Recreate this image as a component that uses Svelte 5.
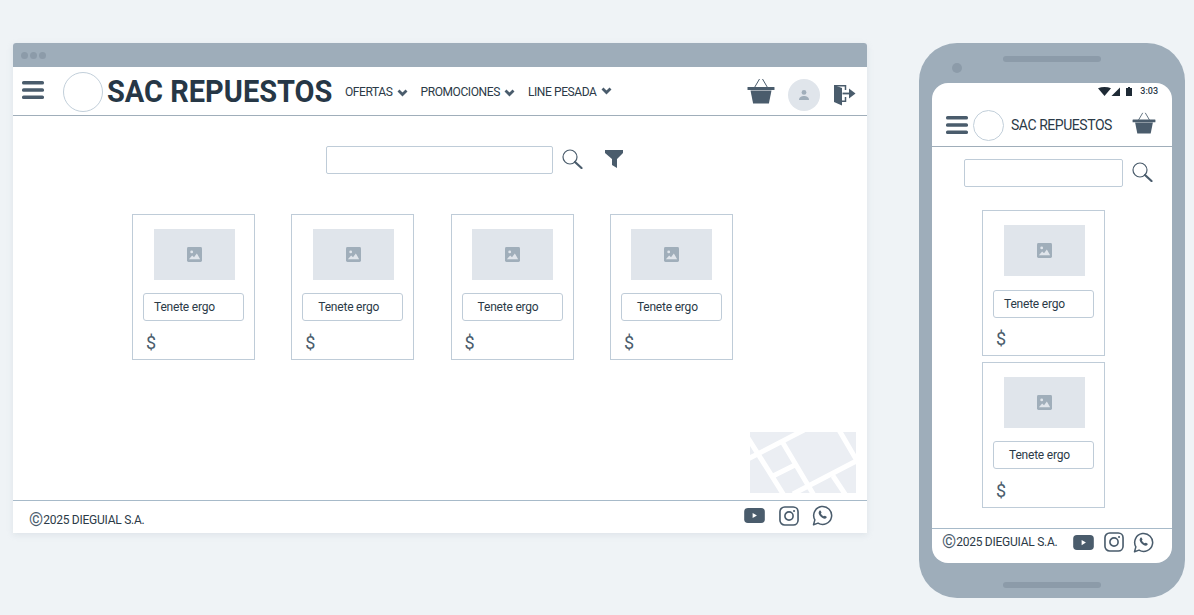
<script>
  const products = ['a', 'b', 'c', 'd'];
</script>

{#snippet burger()}
  <svg class="burger" viewBox="0 0 22 18" aria-hidden="true">
    <rect x="0" y="0" width="22" height="3.6" rx="1.6" />
    <rect x="0" y="7.2" width="22" height="3.6" rx="1.6" />
    <rect x="0" y="14.4" width="22" height="3.6" rx="1.6" />
  </svg>
{/snippet}

{#snippet basket()}
  <svg class="basket" viewBox="0 0 28 26" aria-hidden="true">
    <path d="M7.5 9.5 12.5 1M15.5 1l5 8.5" fill="none" stroke="#4a5c6c" stroke-width="1" />
    <rect x="0.5" y="9" width="27" height="3" rx="0.6" />
    <path d="M3.5 12.5h21l-2.6 13H6.1z" />
  </svg>
{/snippet}

{#snippet search()}
  <svg class="search" viewBox="0 0 21 20" aria-hidden="true">
    <circle cx="8" cy="8" r="7" fill="none" stroke="#4a5c6c" stroke-width="1.2" />
    <path d="M13 13l6.5 6" fill="none" stroke="#4a5c6c" stroke-width="2.2" stroke-linecap="round" />
  </svg>
{/snippet}

{#snippet chevron()}
  <svg class="chev" viewBox="0 0 11 8" aria-hidden="true">
    <path d="M1.5 1.6 5.5 5.6 9.5 1.6" fill="none" stroke="#4a5c6c" stroke-width="2.8" />
  </svg>
{/snippet}

{#snippet social()}
  <svg class="yt" viewBox="0 0 22 16" aria-hidden="true">
    <rect width="22" height="16" rx="4" fill="#4a5c6c" />
    <path d="M9 5.2v5.6l4.6-2.8z" fill="#fff" />
  </svg>
  <svg class="ig" viewBox="0 0 21 21" aria-hidden="true">
    <rect x="1" y="1" width="19" height="19" rx="5" fill="none" stroke="#4a5c6c" stroke-width="1.7" />
    <circle cx="10.5" cy="10.5" r="4.3" fill="none" stroke="#4a5c6c" stroke-width="1.7" />
    <circle cx="15.8" cy="5.2" r="1.1" fill="#4a5c6c" />
  </svg>
  <svg class="wa" viewBox="0 0 22 22" aria-hidden="true">
    <path d="M1.6 20.6 3 15.6A9.4 9.4 0 1 1 6.3 19z" fill="none" stroke="#4a5c6c" stroke-width="1.6" stroke-linejoin="round" />
    <path d="M7.6 6.200c.6-.6 1.300-.6 1.600 0l.7 1.400c.2.400 0 .7-.6 1.300.6 1.300 1.600 2.300 3 3 .6-.6.900-.8 1.300-.6l1.400.7c.6.300.6 1 0 1.600-1 1-2.400.9-4.400-.3-2-1.200-3-2.500-3.500-4.100-.3-1.100 0-2.100.5-3z" fill="#4a5c6c" />
  </svg>
{/snippet}

{#snippet card(first)}
  <article class="card">
    <div class="thumb">
      <svg viewBox="0 0 16 16" aria-hidden="true">
        <rect width="16" height="16" rx="1.5" fill="#a0aeba" />
        <circle cx="5" cy="5.2" r="1.5" fill="#e0e5eb" />
        <path d="M2 13l3.500-4 2 2 3-4.200L14 13z" fill="#e0e5eb" />
      </svg>
    </div>
    <div class="tag" class:first>Tenete ergo</div>
    <div class="price">$</div>
  </article>
{/snippet}

<div class="page">
  <section class="browser">
    <div class="titlebar"><i></i><i></i><i></i></div>
    <header class="nav">
      {@render burger()}
      <div class="logo"></div>
      <h1>SAC REPUESTOS</h1>
      <nav>
        <a href="#o">OFERTAS {@render chevron()}</a>
        <a href="#p">PROMOCIONES {@render chevron()}</a>
        <a href="#l">LINE PESADA <span class="up">{@render chevron()}</span></a>
      </nav>
      {@render basket()}
      <div class="avatar">
        <svg viewBox="0 0 12 12" aria-hidden="true">
          <circle cx="6" cy="3.4" r="2.4" fill="#a0aeba" />
          <path d="M1 11c0-3 2.500-4 5-4s5 1 5 4z" fill="#a0aeba" />
        </svg>
      </div>
      <svg class="exit" viewBox="0 0 23 21" aria-hidden="true">
        <path d="M1 0 9 3v17.500L1 17z" fill="#4a5c6c" />
        <path d="M1 .7h11.500V5M12.500 12v4.300H9" fill="none" stroke="#4a5c6c" stroke-width="1.5" />
        <path d="M9.500 8.500H17" stroke="#4a5c6c" stroke-width="1.8" />
        <path d="M16 3.500l6.500 5-6.500 5z" fill="#4a5c6c" />
      </svg>
    </header>
    <main class="content">
      <div class="searchbar">
        <div class="field"></div>
        {@render search()}
        <svg class="filter" viewBox="0 0 18 18" aria-hidden="true">
          <path d="M0 0h18v3l-6 6v9l-5-3V9L0 3z" fill="#4a5c6c" />
        </svg>
      </div>
      <div class="grid">
        {#each products as p, i (p)}
          {@render card(i === 0)}
        {/each}
      </div>
      <svg class="map" viewBox="0 0 106 61" aria-hidden="true">
        <rect width="106" height="61" fill="#ebeef3" />
        <g fill="none" stroke="#fff" stroke-width="5">
          <path d="M-4 28 54-2M-2 6 35 65M33 11 65 65M23 44 45 33M43 62 110 27M89-2 110 34M83 44 97 65" />
        </g>
      </svg>
    </main>
    <footer class="foot">
      <span class="copy"><b>©</b>2025 DIEGUIAL S.A.</span>
      <div class="icons">{@render social()}</div>
    </footer>
  </section>

  <section class="phone">
    <div class="phone-top"><i class="cam"></i><i class="speaker"></i></div>
    <div class="screen">
      <div class="status">
        <svg viewBox="0 0 34 9" aria-hidden="true">
          <path d="M0 1.200C4-.4 9-.4 13 1.200L6.500 9z" fill="#1e2a35" />
          <path d="M13.500 9 22 .5V9z" fill="#1e2a35" />
          <rect x="28" y="1" width="6" height="8" fill="#1e2a35" />
          <rect x="30" y="0" width="2" height="1" fill="#1e2a35" />
        </svg>
        <span>3:03</span>
      </div>
      <header class="pnav">
        {@render burger()}
        <div class="plogo"></div>
        <div class="ptitle">SAC REPUESTOS</div>
        {@render basket()}
      </header>
      <div class="pbody">
        <div class="psearch">
          <div class="pfield"></div>
          {@render search()}
        </div>
        <div class="pcards">
          {@render card(true)}
          {@render card(false)}
        </div>
      </div>
      <footer class="pfoot">
        <span class="copy"><b>©</b>2025 DIEGUIAL S.A.</span>
        <div class="picons">{@render social()}</div>
      </footer>
    </div>
    <div class="phone-bottom"><i class="speaker"></i></div>
  </section>
</div>

<style>
  :global(body) {
    margin: 0;
    background: #eff3f6;
    overflow: hidden;
  }
  .page {
    width: 1194px;
    height: 615px;
    box-sizing: border-box;
    padding: 43px 9px 0 13px;
    display: flex;
    align-items: flex-start;
    justify-content: space-between;
    font-family: Roboto, "Liberation Sans", sans-serif;
    color: #2b3a47;
  }
  svg { display: block; flex: none; }

  .browser {
    width: 854px;
    height: 490px;
    background: #fff;
    display: flex;
    flex-direction: column;
    border-radius: 3px 3px 0 0;
    box-shadow: 0 2px 6px rgba(160, 174, 186, 0.22);
  }
  .titlebar {
    height: 24px;
    flex: none;
    background: #9eadba;
    border-radius: 3px 3px 0 0;
    display: flex;
    align-items: center;
    gap: 2px;
    padding-left: 8px;
  }
  .titlebar i {
    width: 7px;
    height: 7px;
    border-radius: 50%;
    background: #8c9ba9;
  }
  .nav {
    height: 48px;
    flex: none;
    display: flex;
    align-items: center;
    padding-left: 9px;
    border-bottom: 1px solid #a0aeba;
  }
  .burger { width: 22px; height: 18px; fill: #4a5c6c; margin-bottom: 2px; }
  .logo {
    width: 38px;
    height: 38px;
    border: 1px solid #c2cfda;
    border-radius: 50%;
    margin: 2px 0 0 19px;
    flex: none;
  }
  h1 {
    margin: 0 0 0 4px;
    font-size: 31px;
    font-weight: 700;
    letter-spacing: 0;
    color: #263746;
    white-space: nowrap;
    width: 238px;
    transform-origin: left center;
    transform: scaleX(0.935);
  }
  nav {
    display: flex;
    align-items: center;
    gap: 13px;
    margin-top: 2px;
  }
  nav a {
    display: flex;
    align-items: center;
    gap: 4px;
    font-size: 12px;
    letter-spacing: -0.4px;
    color: #2b3a47;
    text-decoration: none;
    white-space: nowrap;
  }
  .chev { width: 11px; height: 8px; margin-top: 2px; }
  .up { margin-top: -5px; }
  .nav .basket { margin-left: auto; width: 28px; height: 26px; fill: #4a5c6c; }
  .avatar {
    width: 32px;
    height: 32px;
    border-radius: 50%;
    background: #e0e5eb;
    margin: 8px 0 0 13px;
    display: flex;
    align-items: center;
    justify-content: center;
    flex: none;
  }
  .avatar svg { width: 12px; height: 12px; }
  .exit { width: 23px; height: 21px; margin: 8px 11px 0 13px; }

  .content {
    flex: 1;
    display: flex;
    flex-direction: column;
    padding-top: 30px;
    border-bottom: 1px solid #a7bac9;
    min-height: 0;
  }
  .searchbar {
    display: flex;
    align-items: center;
    margin-left: 313px;
  }
  .field {
    width: 225px;
    height: 26px;
    border: 1px solid #bfccd8;
    border-radius: 2px;
  }
  .search { width: 21px; height: 20px; margin-left: 9px; margin-top: -2px; }
  .filter { width: 18px; height: 18px; margin: -2px 0 0 22px; }
  .grid {
    display: flex;
    gap: 36.3px;
    margin: 40px 0 0 119px;
  }
  .card {
    box-sizing: border-box;
    width: 123px;
    height: 146px;
    border: 1px solid #bfccd8;
    display: flex;
    flex-direction: column;
    align-items: flex-start;
    padding: 14px 10px 0;
    flex: none;
  }
  .thumb {
    width: 81px;
    height: 51px;
    background: #e0e5eb;
    margin-left: 10.5px;
    display: flex;
    align-items: center;
    justify-content: center;
  }
  .thumb svg { width: 15px; height: 15px; }
  .tag {
    box-sizing: border-box;
    width: 101px;
    height: 28px;
    margin-top: 13px;
    border: 1px solid #bfccd8;
    border-radius: 3px;
    padding-left: 15px;
    line-height: 26px;
    font-size: 12px;
    letter-spacing: -0.2px;
    color: #2b3a47;
    white-space: nowrap;
  }
  .tag.first { padding-left: 10px; }
  .price {
    margin: 11px 0 0 3px;
    font-size: 18px;
    line-height: 22px;
    color: #4a5c6c;
  }
  .map {
    width: 106px;
    height: 61px;
    margin: auto 11px 7px auto;
  }
  .foot {
    height: 32px;
    flex: none;
    display: flex;
    align-items: center;
    justify-content: space-between;
    padding: 0 34px 0 16px;
  }
  .copy {
    font-size: 12px;
    letter-spacing: -0.25px;
    color: #2b3a47;
    white-space: nowrap;
    display: flex;
    align-items: center;
  }
  .copy b {
    font-weight: 400;
    font-size: 18px;
    letter-spacing: 0;
    line-height: 14px;
    color: #4a5c6c;
  }
  .foot .copy { margin-top: 6px; }
  .icons, .picons {
    display: flex;
    align-items: center;
  }
  .yt { width: 21px; height: 15px; }
  .ig { width: 20px; height: 20px; margin-left: 14px; }
  .wa { width: 21px; height: 21px; margin-left: 13px; }
  .icons { margin-top: -3px; }

  .phone {
    width: 266px;
    height: 555px;
    background: #9eadba;
    border-radius: 38px;
    display: flex;
    flex-direction: column;
    box-sizing: border-box;
    padding: 0 13px;
  }
  .phone-top {
    height: 40px;
    flex: none;
    display: flex;
    align-items: flex-start;
  }
  .cam {
    width: 10px;
    height: 10px;
    border-radius: 50%;
    background: #8c9ba9;
    margin: 20px 0 0 20px;
  }
  .speaker {
    display: block;
    width: 98px;
    height: 6px;
    border-radius: 3px;
    background: #8c9ba9;
  }
  .phone-top .speaker { margin: 13px 0 0 41px; }
  .phone-bottom {
    flex: 1;
    display: flex;
    justify-content: center;
    padding-top: 19px;
  }
  .screen {
    width: 240px;
    height: 480px;
    flex: none;
    background: #fff;
    border-radius: 16px;
    display: flex;
    flex-direction: column;
    overflow: hidden;
  }
  .status {
    height: 16px;
    flex: none;
    display: flex;
    align-items: center;
    justify-content: flex-end;
    padding: 0 14px 0 0;
    gap: 8px;
  }
  .status svg { width: 34px; height: 9px; }
  .status span { font-size: 9px; font-weight: 500; color: #2b3a47; }
  .pnav {
    height: 47px;
    flex: none;
    display: flex;
    align-items: center;
    padding-left: 14px;
    border-bottom: 1px solid #a0aeba;
  }
  .pnav .burger { margin: 5px 0 0; width: 22px; height: 18px; }
  .plogo {
    width: 31px;
    height: 31px;
    box-sizing: border-box;
    border: 1px solid #c2cfda;
    border-radius: 50%;
    margin: 6px 0 0 5px;
    flex: none;
  }
  .ptitle {
    margin: 4px 0 0 7px;
    font-size: 14px;
    letter-spacing: -0.45px;
    color: #2b3a47;
    white-space: nowrap;
    width: 121px;
  }
  .pnav .basket { width: 24px; height: 22px; fill: #4a5c6c; margin: 0; }
  .pbody {
    flex: 1;
    min-height: 0;
    display: flex;
    flex-direction: column;
    border-bottom: 1px solid #a7bac9;
  }
  .psearch {
    display: flex;
    align-items: center;
    margin: 12px 0 0 32px;
  }
  .pfield {
    width: 157px;
    height: 26px;
    border: 1px solid #bfccd8;
    border-radius: 2px;
  }
  .psearch .search { margin-left: 9px; }
  .pcards {
    display: flex;
    flex-direction: column;
    gap: 6px;
    margin: 23px 0 0 50px;
  }
  .pcards .tag.first { margin-top: 14px; }
  .pcards .tag.first + .price { margin-top: 10px; }
  .pfoot {
    box-sizing: border-box;
    height: 34px;
    flex: none;
    display: flex;
    align-items: center;
    padding: 0 0 8px 10px;
  }
  .picons { margin-left: 16px; }
  .picons .ig { margin-left: 10px; }
  .picons .wa { margin-left: 9px; }
</style>
